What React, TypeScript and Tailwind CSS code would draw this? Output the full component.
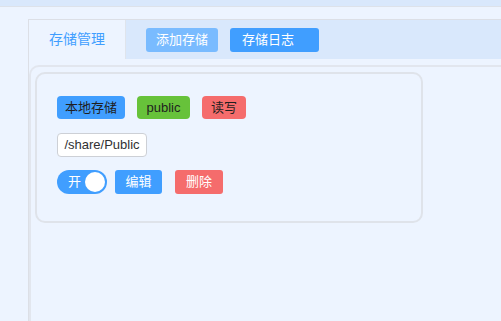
import React from "react";

export default function App() {
  const cjk = { fontFamily: '"Liberation Sans", "Noto Sans CJK SC", sans-serif' };
  return (
    <div
      className="w-[501px] h-[321px] overflow-hidden bg-[#edf4ff] flex flex-col"
      style={cjk}
    >
      <div className="h-[7px] shrink-0 bg-[#d9e8fc] border-b border-[#dde2ea]" />
      <div className="mt-[12px] ml-[28px] flex-1 flex flex-col border-l border-t border-[#dcdfe6] w-[500px]">
        {/* header */}
        <div className="h-[39px] shrink-0 bg-[#d9e8fc] flex items-center">
          <div className="w-[97px] h-full bg-[#edf4ff] border-r border-[#dfe4ec] flex items-center justify-center text-[14px] text-[#409eff]">
            存储管理
          </div>
          <div className="ml-[20px] w-[72px] h-[24px] rounded-[3px] bg-[#79bbff] text-white text-[13px] flex items-center justify-center">
            添加存储
          </div>
          <div className="ml-[12px] w-[89px] h-[24px] rounded-[3px] bg-[#409eff] text-white text-[13px] flex items-center pl-[12px]">
            存储日志
          </div>
        </div>
        {/* body */}
        <div className="mt-[6px] flex-1 border-l-2 border-t-2 border-[#e2e6ee] rounded-tl-[10px] pl-[4px] pt-[5px]">
          <div className="w-[388px] h-[151px] border-2 border-[#dfe3ea] rounded-[10px] pt-[22px] px-[20px] flex flex-col">
            <div className="flex items-center gap-[12px] h-[23px] text-[13px] text-[#1f1f1f]">
              <div className="w-[68px] h-[23px] rounded-[4px] bg-[#409eff] flex items-center justify-center">
                本地存储
              </div>
              <div className="w-[53px] h-[23px] rounded-[4px] bg-[#67c23a] flex items-center justify-center">
                public
              </div>
              <div className="w-[44px] h-[23px] rounded-[4px] bg-[#f56c6c] flex items-center justify-center">
                读写
              </div>
            </div>
            <div className="mt-[14px] w-[90px] h-[24px] rounded-[4px] bg-white border border-[#cdd0d6] text-[13px] text-[#303133] flex items-center justify-center">
              /share/Public
            </div>
            <div className="mt-[13px] flex items-center h-[24px] text-[13px] text-white">
              <div className="w-[50px] h-[24px] rounded-full bg-[#409eff] flex items-center pl-[11px] pr-[2px] justify-between">
                <span>开</span>
                <span className="w-[20px] h-[20px] rounded-full bg-white" />
              </div>
              <div className="ml-[8px] w-[47px] h-[24px] rounded-[3px] bg-[#409eff] flex items-center justify-center">
                编辑
              </div>
              <div className="ml-[13px] w-[48px] h-[24px] rounded-[3px] bg-[#f56c6c] flex items-center justify-center">
                删除
              </div>
            </div>
          </div>
        </div>
      </div>
    </div>
  );
}
